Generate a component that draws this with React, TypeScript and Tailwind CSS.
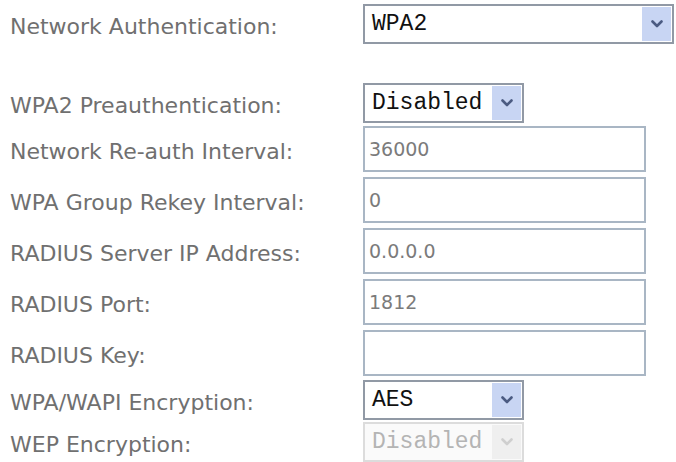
const rows = [
  { label: "Network Authentication:", kind: "select", value: "WPA2", wide: true, mt: "mt-[4px]" },
  { label: "WPA2 Preauthentication:", kind: "select", value: "Disabled", mt: "mt-[39px]" },
  { label: "Network Re-auth Interval:", kind: "input", value: "36000", mt: "mt-[3px]" },
  { label: "WPA Group Rekey Interval:", kind: "input", value: "0", mt: "mt-[5px]" },
  { label: "RADIUS Server IP Address:", kind: "input", value: "0.0.0.0", mt: "mt-[5px]" },
  { label: "RADIUS Port:", kind: "input", value: "1812", mt: "mt-[5px]" },
  { label: "RADIUS Key:", kind: "input", value: "", mt: "mt-[5px]" },
  { label: "WPA/WAPI Encryption:", kind: "select", value: "AES", mt: "mt-[4px]" },
  { label: "WEP Encryption:", kind: "select", value: "Disabled", disabled: true, mt: "mt-[2px]" },
]

function Chevron({ color }: { color: string }) {
  return (
    <svg width="12" height="8" viewBox="0 0 12 8">
      <path d="M1.5 1.5 L6 6 L10.5 1.5" fill="none" stroke={color} strokeWidth="2.6" strokeLinecap="round" strokeLinejoin="round" />
    </svg>
  )
}

function Select({ value, wide, disabled }: { value: string; wide?: boolean; disabled?: boolean }) {
  return (
    <div
      className={`flex h-[40px] items-stretch border-2 p-[1px] ${wide ? "w-[311px]" : "w-[161px]"} ${
        disabled ? "border-[#dcdcdc] bg-[#fafafa]" : "border-[#9199a5] bg-white"
      }`}
    >
      <span
        className={`flex flex-1 items-center pl-[6px] font-['Liberation_Mono',monospace] text-[23px] ${
          disabled ? "text-[#b4b4b4]" : "text-[#111]"
        }`}
      >
        {value}
      </span>
      <span
        className={`flex w-[29px] items-center justify-center ${disabled ? "bg-[#efefef]" : "bg-[#c8d5f3]"}`}
      >
        <Chevron color={disabled ? "#cfcfcf" : "#4b5b82"} />
      </span>
    </div>
  )
}

function TextBox({ value }: { value: string }) {
  return (
    <div className="flex h-[46px] w-[283px] items-center border-2 border-[#a9b6c4] bg-white pl-[4px] font-['DejaVu_Sans',sans-serif] text-[19px] text-[#7b7b7b]">
      {value}
    </div>
  )
}

export default function App() {
  return (
    <div className="h-[462px] w-[676px] overflow-hidden bg-white pl-[10px]">
      <div className="flex flex-col">
        {rows.map((row) => (
          <div key={row.label} className={`flex items-center ${row.mt}`}>
            <div className="w-[353px] pt-[4px] font-['DejaVu_Sans',sans-serif] text-[22px] text-[#707070]">
              {row.label}
            </div>
            {row.kind === "select" ? (
              <Select value={row.value} wide={row.wide} disabled={row.disabled} />
            ) : (
              <TextBox value={row.value} />
            )}
          </div>
        ))}
      </div>
    </div>
  )
}
